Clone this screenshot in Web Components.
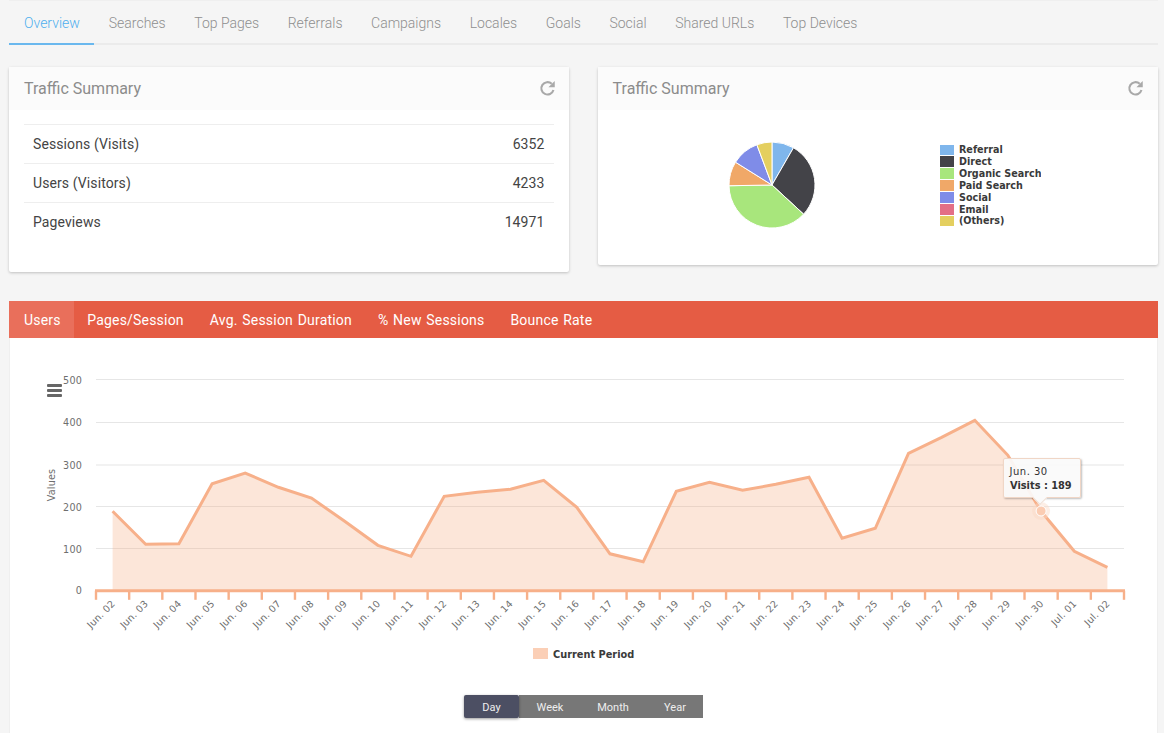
<!DOCTYPE html>
<html lang="en">
<head>
<meta charset="utf-8">
<title>Traffic Summary</title>
<style>
html,body{margin:0;padding:0;height:733px;overflow:hidden;background:#f5f5f5;font-family:Roboto,"Liberation Sans",sans-serif}
body{box-sizing:border-box;padding:0 6px 0 9px}
.row{display:grid;grid-template-columns:560px 560px;column-gap:28.6px;align-items:start;margin-top:22px;margin-bottom:29px}
</style>
</head>
<body>
<dash-tabs active="Overview" items="Overview|Searches|Top Pages|Referrals|Campaigns|Locales|Goals|Social|Shared URLs|Top Devices"></dash-tabs>
<div class="row">
  <dash-card heading="Traffic Summary" style="height:205px">
    <stat-table>
      <stat-row label="Sessions (Visits)" value="6352"></stat-row>
      <stat-row label="Users (Visitors)" value="4233"></stat-row>
      <stat-row label="Pageviews" value="14971"></stat-row>
    </stat-table>
  </dash-card>
  <dash-card heading="Traffic Summary" style="height:198px">
    <traffic-pie></traffic-pie>
  </dash-card>
</div>
<metric-panel items="Users|Pages/Session|Avg. Session Duration|% New Sessions|Bounce Rate" active="Users">
  <line-chart></line-chart>
  <range-buttons items="Day|Week|Month|Year" active="Day"></range-buttons>
</metric-panel>
<script>
function shadow(el,html){el.attachShadow({mode:'open'}).innerHTML=html;return el.shadowRoot}

customElements.define('dash-tabs',class extends HTMLElement{
  connectedCallback(){
    const a=this.getAttribute('active');
    const tabs=this.getAttribute('items').split('|').map(t=>`<a class="${t===a?'on':''}">${t}</a>`).join('');
    shadow(this,`<style>
      :host{display:flex;height:45px;box-sizing:border-box;border-bottom:2px solid #ebebeb;font:300 14px Roboto,sans-serif;color:#8f8f8f;border-top:1px solid #efefef}
      a{display:block;box-sizing:border-box;height:44px;padding:13px 14.3px 0;line-height:18px;margin-bottom:-2px}
      a.on{color:#4fafee;border-bottom:2px solid #6ab8ee;padding:13px 14.6px 0 15px}
    </style>${tabs}`);
  }
});

customElements.define('dash-card',class extends HTMLElement{
  connectedCallback(){
    shadow(this,`<style>
      :host{display:block;box-sizing:border-box;background:#fff;border-radius:2px;box-shadow:0 1px 3px rgba(0,0,0,.22)}
      header{display:flex;justify-content:space-between;align-items:center;height:43px;box-sizing:border-box;padding:0 14px 0 15px;background:#fbfbfb;font:16px Roboto,sans-serif;color:#8c8c8c}
      svg{display:block;width:17px;height:17px;margin-right:-.5px}
    </style>
    <header><span>${this.getAttribute('heading')}</span>
      <svg viewBox="0 0 16 16" fill="none"><path d="M13.6 9.4A5.8 5.8 0 1 1 12 3.6" stroke="#a9a9a9" stroke-width="2"/><path d="M14.8 1V6.9H8.9Z" fill="#a9a9a9"/></svg>
    </header><slot></slot>`);
  }
});

customElements.define('stat-table',class extends HTMLElement{
  connectedCallback(){
    shadow(this,`<style>:host{display:block;margin:14px 15px 0;border-top:1px solid #eee}</style><slot></slot>`);
  }
});
customElements.define('stat-row',class extends HTMLElement{
  connectedCallback(){
    shadow(this,`<style>
      :host{display:flex;justify-content:space-between;align-items:center;height:39px;box-sizing:border-box;padding:0 9.5px 0 9px;font:14px Roboto,sans-serif;color:#444;border-bottom:1px solid #eee;letter-spacing:.1px}
      :host(:last-child){border-bottom-color:transparent}
    </style><span>${this.getAttribute('label')}</span><span>${this.getAttribute('value')}</span>`);
  }
});

customElements.define('traffic-pie',class extends HTMLElement{
  connectedCallback(){
    const S=[['Referral','#7fb6ec',0,30],['Direct','#434348',30,132.7],['Organic Search','#a8e67c',132.7,269],['Paid Search','#f0a868',269,302],['Social','#7f8ce8',302,339.4],['Email','#e36f86',339.4,339.4],['(Others)','#e4cf5f',339.4,360]];
    const c=[174,75],r=43;
    const pt=d=>{const a=d*Math.PI/180;return (c[0]+r*Math.sin(a)).toFixed(2)+' '+(c[1]-r*Math.cos(a)).toFixed(2)};
    const paths=S.filter(s=>s[3]>s[2]).map(s=>`<path d="M${c[0]} ${c[1]}L${pt(s[2])}A${r} ${r} 0 ${s[3]-s[2]>180?1:0} 1 ${pt(s[3])}Z" fill="${s[1]}" stroke="#fff" stroke-width="1"/>`).join('');
    const rows=S.map(s=>`<li><i style="background:${s[1]}"></i><span>${s[0]}</span></li>`).join('');
    shadow(this,`<style>
      :host{display:flex;align-items:flex-start;height:155px}
      svg{display:block;width:342.4px;height:150px;flex:none}
      ul{list-style:none;margin:34px 0 0 0;padding:0;width:101px;overflow:hidden;flex:none;font:bold 9.6px "DejaVu Sans",sans-serif;color:#3a3a3a}
      li{display:flex;align-items:center;height:11.85px;white-space:nowrap}
      i{display:block;flex:none;width:14px;height:10.8px;margin-right:5px}
    </style><svg viewBox="0 0 342.4 150">${paths}</svg><ul>${rows}</ul>`);
  }
});

customElements.define('metric-panel',class extends HTMLElement{
  connectedCallback(){
    const a=this.getAttribute('active');
    const tabs=this.getAttribute('items').split('|').map(t=>`<a class="${t===a?'on':''}">${t}</a>`).join('');
    shadow(this,`<style>
      :host{display:block;width:1149px;height:600px;box-sizing:border-box;background:#fff;border:solid #efefef;border-width:0 1px}
      nav{display:flex;height:37px;background:#e55c44;margin:0 -1px;font:14px Roboto,sans-serif;color:#fff;letter-spacing:.2px;word-spacing:1px}
      a{display:block;padding:0 13px;line-height:38px}
      a.on{background:#e96f5b;padding:0 13.5px 0 15px}
    </style><nav>${tabs}</nav><slot></slot>`);
  }
});

customElements.define('line-chart',class extends HTMLElement{
  connectedCallback(){
    const ox=10,oy=338;
    const Y=[511,544,543.5,483.5,472.8,487,497.8,521,545,556,496,492,489,480,507,553.5,561.5,491,482,490,484,477,538,528,453,437,420,455,511,551,567];
    const names=[];
    for(let i=2;i<=30;i++)names.push('Jun. '+String(i).padStart(2,'0'));
    names.push('Jul. 01','Jul. 02');
    const x0=96-ox,x1=1124-ox,w=(x1-x0)/31,base=590.8-oy;
    const px=i=>x0+w*(i+.5);
    const line=Y.map((y,i)=>`${px(i).toFixed(1)} ${(y+.3-oy).toFixed(1)}`).join('L');
    let g='';
    [[500,379.5,384.2],[400,422.5,426.2],[300,465,469.2],[200,506.5,511.2],[100,548.5,553.2],[0,0,594.2]].forEach(([v,gy,ty])=>{
      if(v)g+=`<line x1="${x0}" x2="${x1}" y1="${gy-oy}" y2="${gy-oy}" stroke="#e6e6e6" stroke-width="1.1"/>`;
      g+=`<text x="${82-ox}" y="${ty-oy}" text-anchor="end" class="t">${v}</text>`;
    });
    let ticks='';
    for(let i=0;i<=31;i++){const x=x0+w*i;ticks+=`<line x1="${x}" x2="${x}" y1="${base}" y2="${base+9}"/>`;}
    const labels=names.map((n,i)=>{const x=px(i)+3,y=base+13.5;return `<text class="t" text-anchor="end" transform="translate(${x.toFixed(1)} ${y}) rotate(-45)">${n}</text>`}).join('');
    const hx=px(28),hy=511-oy;
    shadow(this,`<style>
      :host{display:block;position:relative;height:337px;margin-bottom:20px}
      svg{display:block;width:1147px;height:337px}
      .t{font:9.6px "DejaVu Sans",sans-serif;fill:#6e6e6e;letter-spacing:.2px}
      .b{font:bold 9.8px "DejaVu Sans",sans-serif;fill:#3a3a3a}
      .tip{position:absolute;left:${1003-ox}px;top:${458-oy}px;width:78px;height:40px;box-sizing:border-box;padding:6px 0 0 5.5px;background:rgba(250,250,250,.92);border:1px solid #f0d6c6;border-radius:2px;box-shadow:1px 1px 2px rgba(0,0,0,.25);font:10px/14px "DejaVu Sans",sans-serif;color:#333;letter-spacing:.5px}
      .tip b{display:block;white-space:nowrap;letter-spacing:0;font-size:9.8px;margin-left:.5px}
      .tip:after{content:"";position:absolute;left:31px;top:34px;width:9px;height:9px;background:#fafafa;border:solid #efe0d6;border-width:0 1px 1px 0;transform:rotate(45deg)}
    </style>
    <svg viewBox="0 0 1147 337">
      ${g}
      <path d="M${px(0).toFixed(1)} ${base}L${line}L${px(30).toFixed(1)} ${base}Z" fill="#f6a677" fill-opacity=".28"/>
      <path d="M${line}" fill="none" stroke="#f7b08a" stroke-width="3" stroke-linejoin="miter"/>
      <line x1="${x0-1}" x2="${x1+1}" y1="${base}" y2="${base}" stroke="#f7b08a" stroke-width="3"/>
      <g stroke="#f7b08a" stroke-width="2.4">${ticks}</g>
      ${labels}
      <text class="t" text-anchor="middle" transform="translate(${55-ox} ${485-oy}) rotate(-90)">Values</text>
      <g fill="#666"><rect x="${47-ox}" y="${384-oy}" width="15" height="3" rx="1"/><rect x="${47-ox}" y="${389-oy}" width="15" height="3" rx="1"/><rect x="${47-ox}" y="${394-oy}" width="15" height="3" rx="1"/></g>
      <circle cx="${hx}" cy="${hy}" r="9" fill="#fbd9c6" fill-opacity=".45"/>
      <circle cx="${hx}" cy="${hy}" r="5" fill="#fbccb2" stroke="#fff" stroke-width="1"/>
      <rect x="${533-ox}" y="${648-oy}" width="15" height="11" fill="#fbcfb6"/>
      <text class="b" x="${553-ox}" y="${658-oy}">Current Period</text>
    </svg>
    <div class="tip">Jun. 30<b>Visits : 189</b></div>`);
  }
});

customElements.define('range-buttons',class extends HTMLElement{
  connectedCallback(){
    const a=this.getAttribute('active');
    const W={Day:55,Week:62,Month:64,Year:58};
    const btns=this.getAttribute('items').split('|').map(t=>`<a class="${t===a?'on':''} ${t==='Year'?'last':''}" style="width:${W[t]}px">${t}</a>`).join('');
    shadow(this,`<style>
      :host{display:flex;justify-content:center}
      a{display:block;box-sizing:border-box;height:23px;text-align:center;background:#777;font:11px/25px Roboto,sans-serif;color:#eee}
      a.last{padding-left:2px}
      a.on{background:#4c4f63;border-radius:2px;box-shadow:0 1px 3px rgba(0,0,0,.4);position:relative}
    </style>${btns}`);
  }
});
</script>
</body>
</html>
